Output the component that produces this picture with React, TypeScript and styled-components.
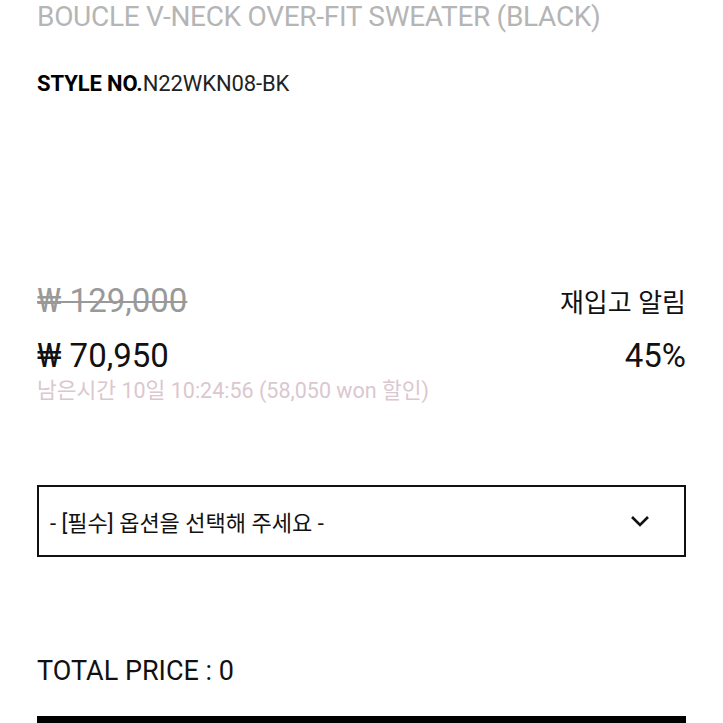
import styled, { createGlobalStyle } from 'styled-components';

const GlobalStyle = createGlobalStyle`
  html, body {
    margin: 0;
    padding: 0;
    background: #fff;
    font-family: Roboto, "Noto Sans CJK KR", sans-serif;
  }
`;

const Page = styled.div`
  width: 723px;
  height: 723px;
  overflow: hidden;
  padding: 0 37px;
  box-sizing: border-box;
`;

const Title = styled.h1`
  margin: -1px 0 0;
  font-size: 28px;
  font-weight: 400;
  line-height: 36px;
  letter-spacing: -0.3px;
  color: #b5b5b5;
  white-space: nowrap;
`;

const StyleNo = styled.div`
  margin-top: 36px;
  font-size: 22px;
  line-height: 26px;
  letter-spacing: -0.1px;
  color: #222;
  b {
    font-weight: 700;
    color: #000;
  }
`;

const PriceBlock = styled.div`
  margin-top: 186px;
  display: grid;
  grid-template-columns: 1fr auto;
  align-items: baseline;
  row-gap: 17px;
`;

const PriceText = styled.div<{ $muted?: boolean; $align?: 'right'; $size?: number }>`
  font-size: ${(p) => p.$size || 33}px;
  line-height: 36px;
  color: ${(p) => (p.$muted ? '#999' : '#111')};
  text-decoration: ${(p) => (p.$muted ? 'line-through' : 'none')};
  text-decoration-thickness: 2px;
  text-align: ${(p) => p.$align || 'left'};
`;

const TimeLeft = styled.div`
  grid-column: 1 / span 2;
  margin-top: -14px;
  font-size: 21.5px;
  line-height: 28px;
  color: #dbc7cf;
`;

const SelectBox = styled.div`
  margin-top: 80px;
  height: 72px;
  border: 2px solid #111;
  box-sizing: border-box;
  display: flex;
  align-items: center;
  justify-content: space-between;
  padding: 0 34px 0 11px;
  font-size: 22px;
  color: #111;
`;

const Total = styled.div`
  margin-top: 98px;
  font-size: 27px;
  line-height: 32px;
  color: #111;
`;

const BuyBar = styled.div`
  margin-top: 29px;
  height: 60px;
  background: #000;
`;

const App = () => (
  <Page>
    <GlobalStyle />
    <Title>BOUCLE V-NECK OVER-FIT SWEATER (BLACK)</Title>
    <StyleNo>
      <b>STYLE NO.</b>
      N22WKN08-BK
    </StyleNo>
    <PriceBlock>
      <PriceText $muted>₩ 129,000</PriceText>
      <PriceText $align="right" $size={26}>재입고 알림</PriceText>
      <PriceText>₩ 70,950</PriceText>
      <PriceText $align="right">45%</PriceText>
      <TimeLeft>남은시간 10일 10:24:56 (58,050 won 할인)</TimeLeft>
    </PriceBlock>
    <SelectBox>
      <span>- [필수] 옵션을 선택해 주세요 -</span>
      <svg width="20" height="12" viewBox="0 0 20 12" fill="none">
        <path d="M2 2l8 8 8-8" stroke="#111" strokeWidth="2.6" />
      </svg>
    </SelectBox>
    <Total>TOTAL PRICE : 0</Total>
    <BuyBar />
  </Page>
);

export default App;
